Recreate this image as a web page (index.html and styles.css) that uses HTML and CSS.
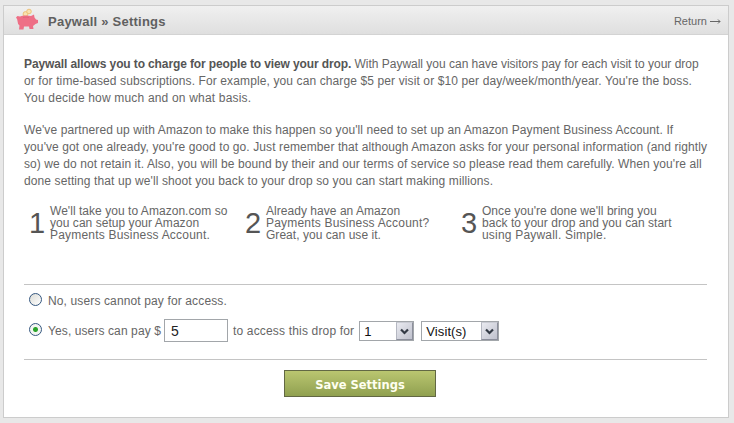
FILE: index.html
```html
<!DOCTYPE html>
<html lang="en">
<head>
<meta charset="utf-8">
<title>Paywall » Settings</title>
<link rel="stylesheet" href="styles.css">
</head>
<body>
<main class="panel">
  <header class="panel-header">
    <svg class="pig" width="24" height="24" viewBox="0 0 24 24">
      <g fill="#f9e3b0" stroke="#edc27a" stroke-width="1"><circle cx="10.5" cy="6" r="2.4"/><circle cx="14" cy="3.5" r="2.3"/></g>
      <path fill="#ee6f86" d="M1 9.5 2.5 8 5 8.5Q8 7 12 7.5L16 8 19 6.5 19.5 9.5 21 11.5 23 12V15L20.5 16 18 18 18.5 21H14.5L14 18.5H9L8.5 21.5H4L4.5 17.5Q2.5 16 2.5 13Q2.5 11 1 9.5Z"/>
      <path d="M8 9.5Q11 8.7 14 9.5" fill="none" stroke="#e0647b"/>
    </svg>
    <h1>Paywall » Settings</h1>
    <a class="return">Return <svg width="11" height="7" viewBox="0 0 11 7"><path d="M0 3.5H10M8 1.5 10 3.5 8 5.5" fill="none" stroke="#666"/></svg></a>
  </header>
  <div class="content">
    <p class="copy">
      <span class="line"><strong>Paywall allows you to charge for people to view your drop.</strong> <span class="l1">With Paywall you can have visitors pay for each visit to your drop</span></span>
      <span class="line l2">or for time-based subscriptions. For example, you can charge $5 per visit or $10 per day/week/month/year. You're the boss.</span>
      <span class="line l3">You decide how much and on what basis.</span>
    </p>
    <p class="copy">
      <span class="line l4">We've partnered up with Amazon to make this happen so you'll need to set up an Amazon Payment Business Account. If</span>
      <span class="line l5">you've got one already, you're good to go. Just remember that although Amazon asks for your personal information (and rightly</span>
      <span class="line l6">so) we do not retain it. Also, you will be bound by their and our terms of service so please read them carefully. When you're all</span>
      <span class="line l7">done setting that up we'll shoot you back to your drop so you can start making millions.</span>
    </p>
    <ol class="steps">
      <li><b>1</b><p>We'll take you to Amazon.com so<br>you can setup your Amazon<br><span class="wide">Payments Business Account.</span></p></li>
      <li><b>2</b><p>Already have an Amazon<br><span class="wide">Payments Business Account?</span><br>Great, you can use it.</p></li>
      <li><b>3</b><p>Once you're done we'll bring you<br>back to your drop and you can start<br><span class="wide">using Paywall. Simple.</span></p></li>
    </ol>
    <form class="options">
      <div class="row first"><i class="radio"></i><span class="no">No, users cannot pay for access.</span></div>
      <div class="row second"><i class="radio on"></i><span class="yes">Yes, users can pay $</span><span class="amount">5</span><span class="access">to access this drop for</span>
        <span class="select count"><span>1</span><i class="arrow"><svg width="9" height="7" viewBox="0 0 9 7"><path d="M1 1.5 4.5 5 8 1.5" fill="none" stroke="#333a45" stroke-width="2.2"/></svg></i></span>
        <span class="select unit"><span>Visit(s)</span><i class="arrow"><svg width="9" height="7" viewBox="0 0 9 7"><path d="M1 1.5 4.5 5 8 1.5" fill="none" stroke="#333a45" stroke-width="2.2"/></svg></i></span>
      </div>
    </form>
    <button class="save" type="button">Save Settings</button>
  </div>
</main>
</body>
</html>
```
FILE: styles.css
```css
* { box-sizing: border-box; }
body { margin: 0; height: 423px; padding: 5px 5px 5px 3px; overflow: hidden; background: #e8e8e8; color: #666; font: 12px/17px "Liberation Sans", Arial, sans-serif; }
.panel { height: 413px; border: 1px solid #ccc; background: #fff; }
.panel-header { display: flex; align-items: center; height: 29px; padding: 0 7px 0 11px; border-bottom: 1px solid #d3d3d3; background: linear-gradient(#f0f0f0, #dfdfdf); }
.pig { flex: none; margin-top: -1px; }
h1 { margin: 3px 0 0 9px; font-size: 13px; line-height: 17px; letter-spacing: .24px; color: #606060; white-space: nowrap; }
.return { margin: 3px 0 0 auto; font-size: 11px; line-height: 17px; white-space: nowrap; }
.content { padding: 21px 21px 0 20px; }
.copy { margin: 0 0 15px; }
.line { display: block; white-space: nowrap; }
strong { color: #555; letter-spacing: -.12px; }
.l1 { letter-spacing: -.01px; }
.l2 { letter-spacing: .115px; }
.l3 { letter-spacing: .18px; }
.l4 { letter-spacing: .098px; }
.l5 { letter-spacing: .094px; }
.l6 { letter-spacing: .088px; }
.l7 { letter-spacing: .105px; }
.steps { display: flex; margin: 0; padding: 0 0 0 6px; height: 79px; list-style: none; }
.steps li { display: flex; width: 216px; }
.steps b { width: 21px; margin-left: -1px; font-size: 29px; line-height: 37px; font-weight: 400; color: #555; }
.steps p { margin: 0; line-height: 12px; letter-spacing: .04px; white-space: nowrap; }
.steps .wide { letter-spacing: .2px; }
.options { height: 76px; border: solid #c4c4c4; border-width: 1px 0; }
.row { display: flex; align-items: center; padding-left: 5px; white-space: nowrap; }
.first { height: 30px; }
.second { height: 30px; }
.radio { flex: none; width: 13px; height: 13px; margin-right: 6px; border: 1px solid #35577f; border-radius: 50%; background: linear-gradient(135deg, #dcdcd6, #fff); }
.radio.on { background: radial-gradient(circle, #2aa32a 0 2px, #f3f5f2 3px); }
.row .radio { margin-top: -1px; }
.no, .yes, .access { padding-top: 3px; }
.no { letter-spacing: .13px; }
.yes { letter-spacing: .1px; }
.access { letter-spacing: .17px; }
.amount { width: 64px; height: 23px; margin: 0 5px 0 3px; padding: 3px 6px; border: 1px solid #a2a6aa; color: #222; font-size: 14px; line-height: 17px; }
.select { display: flex; flex: none; justify-content: space-between; height: 20px; margin-top: 2px; border: 1px solid #a2a6aa; color: #111; font-size: 13px; line-height: 19px; padding-left: 4px; }
.count { width: 55px; margin-left: 5px; }
.unit { width: 78px; margin-left: 7px; letter-spacing: .1px; }
.arrow { display: flex; align-items: center; justify-content: center; width: 17px; height: 18px; border: 1px solid #a6a9b5; border-color: #c9cbd3 #8c8f9c #8c8f9c #b4b7c1; background: linear-gradient(135deg, #e9eaf0, #bfc1cd); }
.save { display: block; width: 152px; height: 27px; margin: 10px 0 0 260px; padding: 2px 0 0; border: 1px solid #626844; background: linear-gradient(#bac670, #90a050); color: #fffff0; font: bold 11.5px/20px "DejaVu Sans", Verdana, sans-serif; }
```
